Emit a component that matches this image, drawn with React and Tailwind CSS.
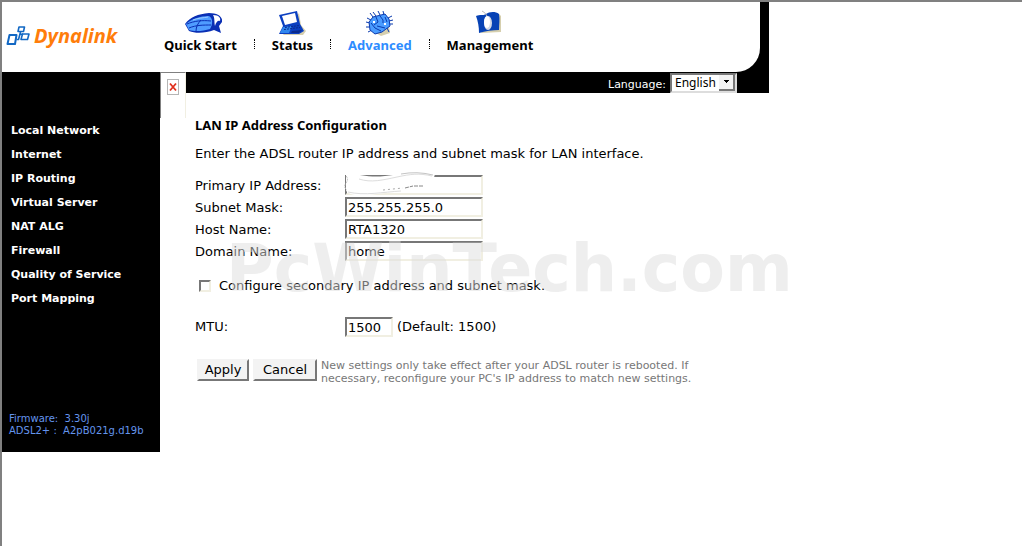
import React, { useState } from "react";

const sideLinks = [
  "Local Network",
  "Internet",
  "IP Routing",
  "Virtual Server",
  "NAT ALG",
  "Firewall",
  "Quality of Service",
  "Port Mapping",
];

const tabs = [
  { label: "Quick Start", Icon: MouseIcon },
  { label: "Status", Icon: LaptopIcon },
  { label: "Advanced", Icon: ChipIcon },
  { label: "Management", Icon: FolderIcon },
];

const inset =
  "h-5 bg-white border-2 border-t-[#777] border-l-[#777] border-r-[#f1efe2] border-b-[#f1efe2] px-px text-[13px] leading-4 outline-none";

const raised =
  "h-[22px] bg-[#f3f3f3] border-2 border-t-[#f3f3f3] border-l-[#f3f3f3] border-r-[#777] border-b-[#777] text-[13px] leading-[18px]";

export default function App() {
  return (
    <div className="min-h-screen bg-white text-black border-t-2 border-l-2 border-[#808080] font-['DejaVu_Sans',Verdana,sans-serif]">
      <div className="w-full max-w-[767px]">
        <Header />
        <div className="flex items-start">
          <Sidebar />
          <BrokenImage />
          <div className="relative flex-1">
            <LanguageBar />
            <LanForm />
            {/* Watermark */}
            <div className="absolute top-[165px] left-10 text-[65px] leading-[64px] font-bold whitespace-nowrap text-[#dddddd]/50 pointer-events-none select-none">
              PcWinTech.com
            </div>
          </div>
        </div>
      </div>
    </div>
  );
}

function Header() {
  const [active, setActive] = useState("Advanced");

  return (
    <header className="bg-black pr-[9px]">
      <div className="h-[70px] bg-white rounded-br-3xl flex items-start">
        <a href="#home" className="w-[162px] pl-1 pt-5 flex items-center gap-1">
          <LogoMark />
          <span className="text-[20px] leading-7 font-bold italic text-[#ff7d0a] font-['Open_Sans',sans-serif]">
            Dynalink
          </span>
        </a>
        <nav className="flex items-end gap-[17px] pt-[7px]">
          {tabs.map(({ label, Icon }, i) => (
            <React.Fragment key={label}>
              {i > 0 && (
                <span className="h-[10px] mb-1 border-l border-dotted border-black" />
              )}
              <a
                href="#tab"
                onClick={() => setActive(label)}
                className={`flex flex-col items-center text-[13px] leading-4 font-bold font-['Noto_Sans',sans-serif] ${
                  active === label ? "text-[#2d8cff]" : "text-black"
                }`}
              >
                <Icon />
                {label}
              </a>
            </React.Fragment>
          ))}
        </nav>
      </div>
    </header>
  );
}

function Sidebar() {
  return (
    <aside className="w-[158px] shrink-0 bg-black pt-[47px] pb-[15px]">
      <nav className="flex flex-col pl-[9px]">
        {sideLinks.map((label) => (
          <a
            key={label}
            href="#section"
            className="text-[11px] leading-6 font-bold text-white"
          >
            {label}
          </a>
        ))}
      </nav>
      <div className="mt-[102px] pl-[7px] text-[10px] leading-3 text-[#6495ed]">
        <p>Firmware:&nbsp; 3.30j</p>
        <p>ADSL2+ :&nbsp; A2pB021g.d19b</p>
      </div>
    </aside>
  );
}

function BrokenImage() {
  return (
    <div className="w-[26px] h-[46px] shrink-0 bg-white border-t border-l border-t-[#808080] border-l-[#808080] border-r border-r-[#f1efe2] pt-[6px] pl-[6px]">
      <svg width="12" height="16" viewBox="0 0 12 16" fill="none">
        <rect x=".5" y=".5" width="11" height="15" stroke="#b5b5b5" />
        <path d="M3 4.500 L9 11.500 M9 4.500 L3 11.500" stroke="#e0301e" strokeWidth="1.800" />
      </svg>
    </div>
  );
}

function LanguageBar() {
  return (
    <div className="h-[21px] bg-black flex justify-end items-center gap-1 pr-8">
      <label htmlFor="language" className="pt-1 text-[11px] leading-4 text-white">
        Language:
      </label>
      <div className="relative">
        <select
          id="language"
          className="block appearance-none w-[67px] h-5 bg-white text-black border-2 border-t-[#777] border-l-[#777] border-r-[#ddd] border-b-[#ddd] pl-[3px] text-[12px] leading-4 font-['Noto_Sans',sans-serif]"
        >
          <option>English</option>
        </select>
        <span className="absolute right-[2px] top-[2px] w-4 h-4 bg-[#f3f3f3] border-r-2 border-b-2 border-[#777] flex items-center justify-center pointer-events-none">
          <svg width="5" height="3" viewBox="0 0 5 3">
            <path d="M0 0h5v1H4v1H3v1H2V2H1V1H0z" fill="#000" />
          </svg>
        </span>
      </div>
    </div>
  );
}

function LanForm() {
  return (
    <form
      className="pl-[9px] pt-[22px] text-[13px] leading-5"
      onSubmit={(e) => e.preventDefault()}
    >
      <h1 className="font-bold font-['Noto_Sans',sans-serif]">
        LAN IP Address Configuration
      </h1>
      <p className="mt-[9px]">
        Enter the ADSL router IP address and subnet mask for LAN interface.
      </p>

      <div className="mt-[11px]">
        <Field id="ip" label="Primary IP Address:" value="">
          <Smudge />
        </Field>
        <Field id="mask" label="Subnet Mask:" value="255.255.255.0" />
        <Field id="host" label="Host Name:" value="RTA1320" />
        <Field id="domain" label="Domain Name:" value="home" />
      </div>

      <div className="mt-[13px] pl-1 flex items-center gap-2">
        <input
          id="secondary"
          type="checkbox"
          className="appearance-none size-3 bg-white border-2 border-t-[#777] border-l-[#777] border-r-[#f1efe2] border-b-[#f1efe2] checked:bg-black"
        />
        <label htmlFor="secondary">
          Configure secondary IP address and subnet mask.
        </label>
      </div>

      <div className="mt-[21px] flex items-center">
        <label htmlFor="mtu" className="w-[150px]">
          MTU:
        </label>
        <input id="mtu" defaultValue="1500" className={`${inset} w-12`} />
        <span className="pl-1">(Default: 1500)</span>
      </div>

      <div className="mt-[22px] pl-[2px] flex items-start gap-1">
        <button type="submit" className={`${raised} w-[52px]`}>
          Apply
        </button>
        <button type="reset" className={`${raised} w-16`}>
          Cancel
        </button>
        <p className="max-w-[400px] text-[11px] leading-[13px] text-[#777]">
          New settings only take effect after your ADSL router is rebooted. If
          necessary, reconfigure your PC's IP address to match new settings.
        </p>
      </div>
    </form>
  );
}

function Field({ id, label, value, children }) {
  return (
    <div className="h-[22px] flex items-start">
      <label htmlFor={id} className="w-[150px] leading-[22px]">
        {label}
      </label>
      <div className="relative">
        <input
          id={id}
          defaultValue={value}
          className={`${inset} block w-[138px]`}
        />
        {children}
      </div>
    </div>
  );
}

// eraser marks over the address
function Smudge() {
  return (
    <svg
      className="absolute -top-1 -left-1 pointer-events-none"
      width="100"
      height="28"
      viewBox="0 0 100 28"
      fill="none"
    >
      <path
        d="M5 3 C20 3 28 7 44 5 S72 0 94 3 L90 17 C70 20 50 21 28 24 C14 26 5 22 5 19Z"
        fill="#fff"
      />
      <path d="M18 8 C30 12 42 9 56 6 S78 2 91 5" stroke="#ddd" />
      <path d="M60 3 Q76 0 92 4" stroke="#c4c4c4" />
      <path d="M5 5 Q8 8 5 12 T6 19" stroke="#bbb" strokeDasharray="2 1" />
      <path d="M7 21 C24 25 42 21 60 20" stroke="#ddd" />
      <path d="M42 19 L62 17" stroke="#aaa" strokeDasharray="2 3" />
      <path d="M64 17 L72 15 M73 15 H82" stroke="#888" strokeDasharray="4 1" />
    </svg>
  );
}

function LogoMark() {
  return (
    <svg width="24" height="22" viewBox="0 0 24 22" fill="none" stroke="#1268c4" strokeLinejoin="round">
      <path d="M3.500 10 H10.500 L9 19 H1.500Z" strokeWidth="2" />
      <path d="M13 2 H18.500 L17.500 6.500 H12Z" strokeWidth="1.600" />
      <path d="M16.500 9 H23 L21.500 14.500 H15Z" strokeWidth="1.600" />
      <path d="M14.500 7 L12.500 14.500 H10.500 M14 9.500 L17 9" strokeWidth="1.600" />
    </svg>
  );
}

function MouseIcon() {
  return (
    <svg width="44" height="28" viewBox="0 0 44 28" fill="none">
      <path d="M7 15 C12 8 20 5 31 4 C40 4 45 8 44 13 L41 17 L43 24 L36 21 C28 24 18 25 11 22Z" fill="#0a2fb4" />
      <path d="M8 15 C13 10 22 7 31 7 C35 9 35 15 32 20 C26 22 17 23 11 21Z" fill="#4f9cff" />
      <path d="M9 15 C16 12 24 11 33 12 M18 22 C18 18 20 14 23 11 M11 19 C18 16 26 16 33 16" stroke="#0a2fb4" />
      <path d="M15 11 C20 9 25 9 30 8" stroke="#9bccff" />
      <path d="M35 6 C41 6 43 9 42 12 C40 11 38 13 37 17 C36 13 37 9 35 6Z" fill="#fff" />
    </svg>
  );
}

function LaptopIcon() {
  return (
    <svg width="30" height="28" viewBox="0 0 30 28" fill="none">
      <path d="M6 26 L26 26 L29 22 L24 16 L22 4Z" fill="#d6cfae" />
      <path d="M2 6 L20 2 L23 15 L27 22 L22 25 L2 25 L6 17Z" fill="#0b3fc0" />
      <path d="M5 7 L18 4 L20 13 L8 16Z" fill="#fff" />
      <path d="M6 18 L3 24 H12 L15 17Z" fill="#2f86ee" />
      <path d="M8 18.500 L22 16.500 M7 20.500 L23 18.500" stroke="#0a2a8c" strokeDasharray="2 1" />
      <path d="M15 22 L25 21 L22 24 H14Z" fill="#0a2a8c" />
    </svg>
  );
}

function ChipIcon() {
  return (
    <svg width="30" height="28" viewBox="0 0 30 28" fill="none">
      <path d="M11 24 L20 20 L24 16 L25 24 L22 25 L16 27Z" fill="#d6cfae" />
      <path
        d="M8 8 L5 4 M11 7 L8 3 M15 6 L13 2 M19 6 L18 2 M6 11 L2 9 M5 14 L1 13 M5 18 L1 18 M7 21 L3 23 M23 9 L27 7 M24 12 L28 11 M24 15 L28 15 M22 19 L24 23"
        stroke="#0a3aae"
      />
      <path d="M8 8 L20 5 L24 10 L25 17 L17 23 L10 25 L5 21 L4 13Z" fill="#4a9cff" />
      <path
        d="M8 8 L20 5 L24 10 L25 17 L17 23 L10 25 L5 21 L4 13Z M11 8 L13 13 L9 16 M15 7 L18 11 V14 M20 8 L22 13 M6 14 L10 19 L16 22 M12 17 L20 19"
        stroke="#0a3aae"
      />
      <path d="M19 14h2v2h-2z M8 12h2v2H8z" fill="#fff" />
    </svg>
  );
}

function FolderIcon() {
  return (
    <svg width="30" height="28" viewBox="0 0 30 28" fill="none">
      <path d="M6 24 L26 23 L26 7 L24 5Z" fill="#d6cfae" />
      <path d="M1 7 C5 5 8 7 11 5 S20 2 24 5 C25 10 24 16 24 21 C18 21 10 22 4 24 C4 18 3 12 1 7Z" fill="#0742b5" />
      <path d="M12 7 Q10 3 7 2" stroke="#bbb" />
      <ellipse cx="13" cy="14" rx="4" ry="7" fill="#d5dae6" />
      <ellipse cx="12" cy="13" rx="3" ry="6" fill="#fff" />
    </svg>
  );
}
